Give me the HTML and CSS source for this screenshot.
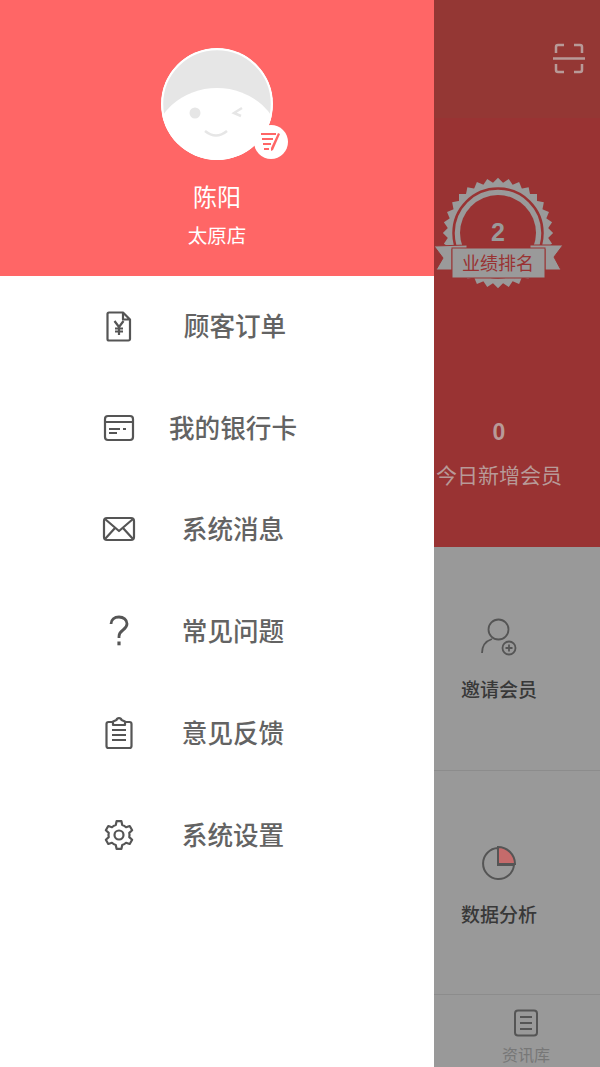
FILE: index.html
```html
<!DOCTYPE html>
<html lang="zh-CN">
<head>
    <meta charset="UTF-8">
    <meta name="viewport" content="width=device-width, initial-scale=1.0">
    <title>我的</title>
    <link rel="stylesheet" href="styles.css">
</head>
<body>
    <div class="screen">
        <aside class="drawer">
            <header class="profile">
                <div class="avatar">
                    <svg class="avatar-face" width="112" height="112" viewBox="0 0 112 112">
                        <circle cx="56" cy="56" r="56" fill="#e6e6e6"/>
                        <ellipse cx="56" cy="98" rx="64" ry="58" fill="#fff"/>
                        <circle cx="56" cy="56" r="55" fill="none" stroke="#fff" stroke-width="2.500"/>
                        <circle cx="34" cy="65" r="5.500" fill="#e6e6e6"/>
                        <path d="M81 60l-8 5 7 3" fill="none" stroke="#e6e6e6" stroke-width="2.500"/>
                        <path d="M44 83q11 9 22 0" fill="none" stroke="#e6e6e6" stroke-width="2.500"/>
                    </svg>
                    <span class="avatar-edit">
                        <svg width="24" height="22" viewBox="0 0 24 22">
                            <path d="M2 3h15M3 8h11M4 13h8M5 18h5" fill="none" stroke="#ff6666" stroke-width="2"/>
                            <path d="M21 3l-7 16-2 1 0-3 7-15z" fill="#ff6666"/>
                        </svg>
                    </span>
                </div>
                <div class="profile-name">陈阳</div>
                <div class="profile-shop">太原店</div>
            </header>
            <nav class="menu">
                <a class="menu-row">
                    <svg class="menu-icon" width="40" height="40" viewBox="0 0 40 40">
                        <path d="M10 6.500h14l7 7v19.500a1.500 1.500 0 0 1-1.500 1.500h-19.500a1.500 1.500 0 0 1-1.500-1.500v-25a1.500 1.500 0 0 1 1.500-1.500zM24 6.500v7h7"/>
                        <path d="M15.500 15l4.500 6 4.500-6M20 21v8M16 22.500h8M16 25.500h8"/>
                    </svg>
                    <span class="menu-label menu-label-first">顾客订单</span>
                </a>
                <a class="menu-row">
                    <svg class="menu-icon" width="40" height="40" viewBox="0 0 40 40">
                        <rect x="6" y="8" width="28" height="24" rx="3"/>
                        <path d="M6 14h28M10 21h11M24 21h3M10 25h8"/>
                    </svg>
                    <span class="menu-label">我的银行卡</span>
                </a>
                <a class="menu-row">
                    <svg class="menu-icon" width="40" height="40" viewBox="0 0 40 40">
                        <rect x="5" y="9" width="30" height="22" rx="3"/>
                        <path d="M6 10l14 12 14-12M6 30l10-11M34 30l-10-11"/>
                    </svg>
                    <span class="menu-label">系统消息</span>
                </a>
                <a class="menu-row">
                    <svg class="menu-icon" width="40" height="40" viewBox="0 0 40 40">
                        <path class="icon-heavy" d="M12 13c0-4.500 3.500-7 8-7s8 2.800 8 6.800c0 3-1.800 4.600-4 6.200-2.500 1.800-4 3-4 6.500v1.500"/>
                        <path class="icon-dot" d="M20 30.500v3.800"/>
                    </svg>
                    <span class="menu-label">常见问题</span>
                </a>
                <a class="menu-row">
                    <svg class="menu-icon" width="40" height="40" viewBox="0 0 40 40">
                        <path d="M14 9h-4.500a2 2 0 0 0-2 2v22a2 2 0 0 0 2 2h21a2 2 0 0 0 2-2v-22a2 2 0 0 0-2-2h-4.500"/>
                        <path d="M14 12v-3.500l3.500-1.500c.5-2.500 4.500-2.500 5 0l3.500 1.500v3.500z"/>
                        <path d="M13 17h14M13 22h14M13 27h14"/>
                    </svg>
                    <span class="menu-label">意见反馈</span>
                </a>
                <a class="menu-row">
                    <svg class="menu-icon" width="40" height="40" viewBox="0 0 40 40">
                        <path d="M16.760 10.010L17.570 6.210H22.430L23.240 10.010A10.500 10.500 0 0 1 27.030 12.200L30.720 11L33.160 15.210L30.270 17.820A10.500 10.500 0 0 1 30.270 22.180L33.160 24.790L30.720 29L27.030 27.800A10.500 10.500 0 0 1 23.240 29.990L22.430 33.790H17.570L16.760 29.990A10.500 10.500 0 0 1 12.970 27.800L9.280 29L6.840 24.790L9.730 22.180A10.500 10.500 0 0 1 9.730 17.820L6.840 15.210L9.280 11L12.970 12.200A10.500 10.500 0 0 1 16.760 10.010Z"/>
                        <circle cx="20" cy="20" r="4.500"/>
                    </svg>
                    <span class="menu-label">系统设置</span>
                </a>
            </nav>
        </aside>

        <main class="home">
            <section class="home-red">
                <div class="home-bar">
                    <svg width="32" height="32" viewBox="0 0 32 32" fill="none" stroke="#b89a98" stroke-width="2.500">
                        <path d="M3 10v-6a2 2 0 0 1 2-2h6M21 2h6a2 2 0 0 1 2 2v6M3 21v6a2 2 0 0 0 2 2h6M21 29h6a2 2 0 0 0 2-2v-6M0 15.500h32"/>
                    </svg>
                </div>
                <svg class="medal" width="130" height="120" viewBox="4 0 130 120">
                    <g fill="#9a9a9a">
                        <rect x="29" y="24" width="78" height="78"/>
                        <rect x="29" y="24" width="78" height="78" transform="rotate(11.250 68 63)"/>
                        <rect x="29" y="24" width="78" height="78" transform="rotate(22.500 68 63)"/>
                        <rect x="29" y="24" width="78" height="78" transform="rotate(33.750 68 63)"/>
                        <rect x="29" y="24" width="78" height="78" transform="rotate(45 68 63)"/>
                        <rect x="29" y="24" width="78" height="78" transform="rotate(56.250 68 63)"/>
                        <rect x="29" y="24" width="78" height="78" transform="rotate(67.500 68 63)"/>
                        <rect x="29" y="24" width="78" height="78" transform="rotate(78.750 68 63)"/>
                    </g>
                    <circle cx="68" cy="63" r="44.500" fill="none" stroke="#993333" stroke-width="2.500"/>
                    <circle cx="68" cy="63" r="38" fill="#993333"/>
                    <path d="M4 76l9 12-7 12h16v-21h15v-4zM133 75l-9 12 7 13h-16v-21h-15v-4z" fill="#9a9a9a" stroke="#993333" stroke-width="1"/>
                    <rect x="22" y="78" width="93" height="30" fill="#9a9a9a" stroke="#993333" stroke-width="1"/>
                    <text class="medal-num" x="68" y="71" text-anchor="middle">2</text>
                    <text class="medal-text" x="68" y="100" text-anchor="middle">业绩排名</text>
                </svg>
                <div class="stat-num">0</div>
                <div class="stat-label">今日新增会员</div>
            </section>

            <section class="cell">
                <svg width="40" height="40" viewBox="0 0 40 40" fill="none" stroke="#555" stroke-width="1.800">
                    <circle cx="19.500" cy="12.500" r="10"/>
                    <path d="M3 36c0-7 4-12 10-14"/>
                    <circle cx="30" cy="31" r="6.500"/>
                    <path d="M26.500 31h7M30 27.500v7"/>
                </svg>
                <div class="cell-label">邀请会员</div>
            </section>

            <section class="cell cell-chart">
                <svg width="40" height="40" viewBox="0 0 40 40" stroke="#555" stroke-width="2">
                    <path d="M19 4a15.500 15.500 0 1 0 16 17h-16z" fill="none"/>
                    <path d="M19 3a17 17 0 0 1 17 17h-17z" fill="#c56b6b"/>
                </svg>
                <div class="cell-label">数据分析</div>
            </section>

            <footer class="tabbar">
                <div class="tab">
                    <svg width="26" height="28" viewBox="0 0 26 28" fill="none" stroke="#555" stroke-width="2">
                        <rect x="2" y="1.500" width="22" height="25" rx="3"/>
                        <path d="M7 8h12M7 14h12M7 20h12"/>
                    </svg>
                    <div class="tab-label">资讯库</div>
                </div>
            </footer>
        </main>
    </div>
</body>
</html>
```

FILE: styles.css
```css
html, body {
    margin: 0;
    padding: 0;
    height: 1067px;
    overflow: hidden;
}
body {
    font-family: "Noto Sans CJK SC", "Noto Sans", sans-serif;
    background-color: #999;
}
svg {
    display: block;
}
.screen {
    display: flex;
    width: 600px;
    height: 1067px;
}
.drawer {
    width: 434px;
    flex: none;
    background-color: #fff;
}
.profile {
    height: 276px;
    box-sizing: border-box;
    padding-top: 48px;
    background-color: #ff6666;
    color: #fff;
    display: flex;
    flex-direction: column;
    align-items: center;
}
.avatar {
    position: relative;
    width: 112px;
    height: 112px;
}
.avatar-face {
    clip-path: circle(56px at 56px 56px);
}
.avatar-edit {
    position: absolute;
    left: 93px;
    top: 77px;
    width: 34px;
    height: 34px;
    border-radius: 50%;
    background-color: #fff;
    display: flex;
    align-items: center;
    justify-content: center;
}
.profile-name {
    margin-top: 19px;
    font-size: 24px;
    line-height: 34px;
}
.profile-shop {
    margin-top: 8px;
    font-size: 19.500px;
    line-height: 28px;
}
.menu {
    margin-top: -1px;
}
.menu-row {
    height: 101.800px;
    display: flex;
    align-items: center;
    padding-left: 99px;
}
.menu-icon {
    flex: none;
    fill: none;
    stroke: #555;
    stroke-width: 2.200;
    stroke-linejoin: round;
}
.icon-heavy {
    stroke-width: 2.800;
}
.icon-dot {
    stroke-width: 3.200;
}
.menu-label {
    width: 160px;
    margin-left: 14px;
    padding-bottom: 2px;
    text-align: center;
    font-size: 25.600px;
    font-weight: 500;
    line-height: 36px;
    color: #636363;
}
.menu-label-first {
    margin-left: 16px;
}
.home {
    width: 166px;
    flex: none;
    display: flex;
    flex-direction: column;
}
.home-red {
    height: 547px;
    flex: none;
    background-color: #993333;
}
.home-bar {
    height: 118px;
    box-sizing: border-box;
    padding: 43px 15px 0 0;
    background-color: #943734;
    display: flex;
    justify-content: flex-end;
}
.medal {
    margin-top: 52px;
}
.medal-num {
    font-family: "Liberation Sans", sans-serif;
    font-size: 25px;
    font-weight: bold;
    fill: #9a9a9a;
}
.medal-text {
    font-size: 18px;
    fill: #993333;
}
.stat-num, .stat-label {
    width: 130px;
    text-align: center;
    color: #b89a98;
}
.stat-num {
    margin-top: 127px;
    font-family: "Liberation Sans", sans-serif;
    font-size: 23px;
    font-weight: bold;
    line-height: 30px;
}
.stat-label {
    margin-top: 12px;
    font-size: 21px;
    line-height: 30px;
    white-space: nowrap;
}
.cell {
    height: 224px;
    flex: none;
    box-sizing: border-box;
    width: 100%;
    padding-top: 70px;
    padding-right: 36px;
    border-bottom: 1px solid #8c8c8c;
    display: flex;
    flex-direction: column;
    align-items: center;
}
.cell-chart {
    padding-top: 73px;
}
.cell-chart .cell-label {
    margin-top: 16px;
}
.cell-label {
    margin-top: 18px;
    font-size: 19px;
    font-weight: 500;
    line-height: 28px;
    color: #383838;
    white-space: nowrap;
}
.tabbar {
    flex: 1;
    display: flex;
    justify-content: center;
    padding-left: 18px;
    padding-top: 14px;
    overflow: hidden;
}
.tab {
    display: flex;
    flex-direction: column;
    align-items: center;
}
.tab-label {
    margin-top: 5px;
    font-size: 16px;
    line-height: 24px;
    color: #777;
}
```
